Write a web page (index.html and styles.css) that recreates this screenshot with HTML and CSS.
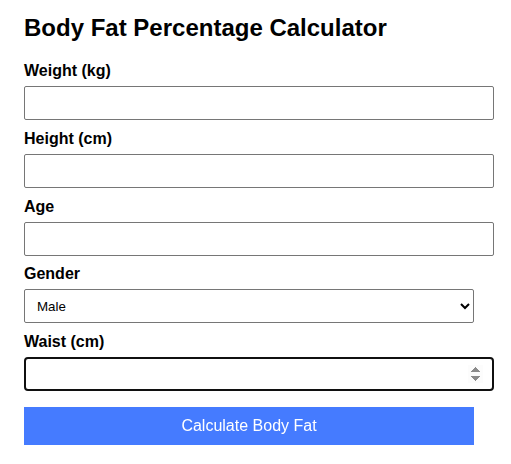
FILE: index.html
```html
<!DOCTYPE html>
<html lang="en">
<head>
    <meta charset="UTF-8">
    <meta name="viewport" content="width=device-width, initial-scale=1.0">
    <title>Body Fat Percentage Calculator</title>
    <link rel="stylesheet" href="styles.css">
</head>
<body>
    <div class="container">
        <h2>Body Fat Percentage Calculator</h2>
        <form class="calc-form" onsubmit="return false;">
            <label for="weight">Weight (kg)</label>
            <input type="number" id="weight">

            <label for="height">Height (cm)</label>
            <input type="number" id="height">

            <label for="age">Age</label>
            <input type="number" id="age">

            <label for="gender">Gender</label>
            <select id="gender">
                <option value="male">Male</option>
                <option value="female">Female</option>
            </select>

            <label for="waist">Waist (cm)</label>
            <input type="number" id="waist" autofocus>

            <button type="submit" class="calc-btn">Calculate Body Fat</button>
        </form>
    </div>
</body>
</html>
```

FILE: styles.css
```css
body {
    font-family: 'Liberation Sans', Arial, sans-serif;
    margin: 0;
    padding: 14px 24px 0;
    background: #fff;
    color: #000;
}
.container {
    width: 450px;
}
h2 {
    font-size: 24px;
    line-height: 28px;
    margin: 0 0 20px;
}
label {
    display: block;
    font-weight: bold;
    font-size: 16px;
    line-height: 18px;
    margin-bottom: 6px;
}
input {
    display: block;
    width: 448px;
    height: 16px;
    padding: 8px 10px;
    box-sizing: content-box;
    font-size: 16px;
    font-family: inherit;
    border: 1px solid #767676;
    border-radius: 2px;
    margin: 0 0 9.75px;
}
select {
    display: block;
    width: 100%;
    height: 34px;
    box-sizing: border-box;
    padding: 0 8px;
    font-family: inherit;
    font-size: 13.33px;
    border: 1px solid #767676;
    border-radius: 2px;
    margin: 0 0 9.75px;
    background: #fff;
}
.calc-btn {
    display: block;
    width: 100%;
    height: 38px;
    margin-top: 16px;
    border: none;
    background-color: #457bff;
    color: #fff;
    font-family: inherit;
    font-size: 16px;
    cursor: pointer;
}
```
